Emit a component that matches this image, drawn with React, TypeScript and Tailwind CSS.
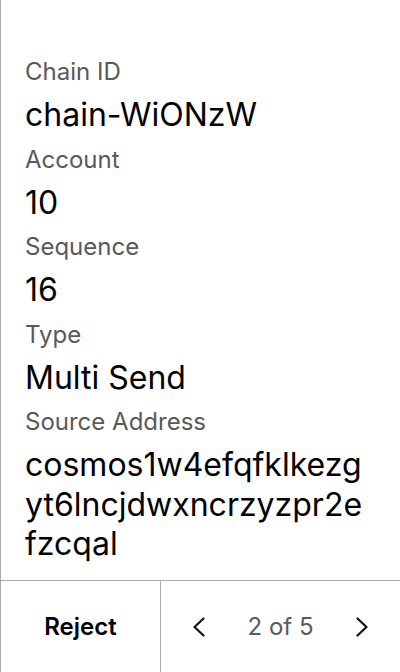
const fields = [
  { label: "Chain ID", value: "chain-WiONzW" },
  { label: "Account", value: "10" },
  { label: "Sequence", value: "16" },
  { label: "Type", value: "Multi Send" },
  { label: "Source Address", value: "cosmos1w4efqfklkezgyt6lncjdwxncrzyzpr2efzcqal" },
];

function Chevron({ dir }: { dir: "left" | "right" }) {
  return (
    <svg width="12" height="20" viewBox="0 0 12 20" fill="none" stroke="#111" strokeWidth="2.2" strokeLinecap="round" strokeLinejoin="round">
      {dir === "left" ? <polyline points="10.5,1.5 1.5,10 10.5,18.5" /> : <polyline points="1.5,1.5 10.5,10 1.5,18.5" />}
    </svg>
  );
}

export default function App() {
  return (
    <div className="flex h-[672px] w-[400px] flex-col border-l border-[#aaaaaa] bg-white font-['Inter',sans-serif]">
      <div className="flex flex-1 flex-col gap-[11px] pl-6 pr-[30px] pt-[58px]">
        {fields.map((f) => (
          <div key={f.label} className="flex flex-col gap-[9px]">
            <div className="text-[24px] leading-[28px] text-[#595959]">{f.label}</div>
            <div className="break-all text-[32px] leading-[39.5px] text-black">{f.value}</div>
          </div>
        ))}
      </div>

      <div className="flex h-[92px] border-t border-[#aaaaaa]">
        <button className="flex w-[160px] items-center justify-center border-r border-[#aaaaaa] text-[24px] font-semibold text-black">
          Reject
        </button>
        <div className="flex flex-1 items-center justify-between px-8">
          <Chevron dir="left" />
          <span className="text-[24px] text-[#5a5a5a]">2 of 5</span>
          <Chevron dir="right" />
        </div>
      </div>
    </div>
  );
}
